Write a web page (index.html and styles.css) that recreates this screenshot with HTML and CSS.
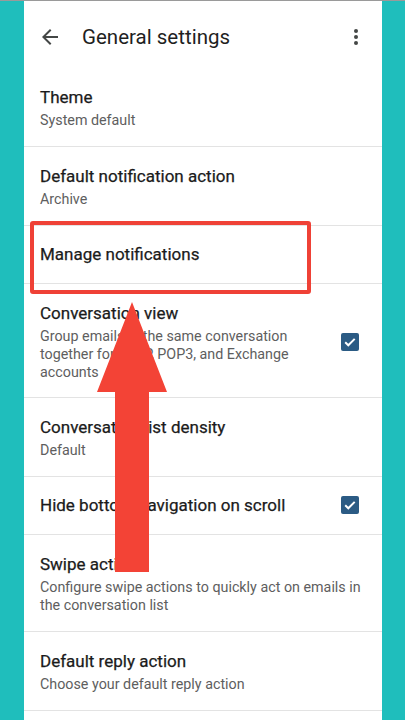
FILE: index.html
```html
<!DOCTYPE html>
<html>
<head>
<meta charset="utf-8">
<link rel="stylesheet" href="styles.css">
</head>
<body>
<div class="screen">
  <header class="appbar">
    <svg class="icon" viewBox="0 0 24 24"><path d="M20 11H7.83l5.59-5.59L12 4l-8 8 8 8 1.41-1.41L7.83 13H20v-2z"/></svg>
    <h1 class="appbar-title">General settings</h1>
    <svg class="icon menu" viewBox="0 0 24 24"><circle cx="12" cy="6" r="2"/><circle cx="12" cy="12" r="2"/><circle cx="12" cy="18" r="2"/></svg>
  </header>
  <ul class="list">
    <li class="item"><div class="text"><div class="title">Theme</div><div class="sub">System default</div></div></li>
    <li class="item"><div class="text"><div class="title">Default notification action</div><div class="sub">Archive</div></div></li>
    <li class="item single"><div class="text"><div class="title">Manage notifications</div></div></li>
    <li class="item tall"><div class="text"><div class="title">Conversation view</div><div class="sub">Group emails in the same conversation together for IMAP, POP3, and Exchange accounts</div></div><span class="check"><svg viewBox="0 0 18 18"><path d="M4.2 9.3l3.1 3 6.4-6.4" /></svg></span></li>
    <li class="item"><div class="text"><div class="title">Conversation list density</div><div class="sub">Default</div></div></li>
    <li class="item single"><div class="text"><div class="title">Hide bottom navigation on scroll</div></div><span class="check"><svg viewBox="0 0 18 18"><path d="M4.2 9.3l3.1 3 6.4-6.4" /></svg></span></li>
    <li class="item short"><div class="text wide"><div class="title">Swipe actions</div><div class="sub">Configure swipe actions to quickly act on emails in the conversation list</div></div></li>
    <li class="item"><div class="text"><div class="title">Default reply action</div><div class="sub">Choose your default reply action</div></div></li>
  </ul>
</div>
<div class="highlight"></div>
<svg class="arrow" viewBox="0 0 405 720"><polygon points="132,302 167,392 149,392 149,572 115,572 115,392 97,392"/></svg>
</body>
</html>
```
FILE: styles.css
```css
html, body { margin: 0; padding: 0; }
body {
  background: #1fbebc;
  border-top: 1px solid #9a9a9a;
  height: 719px;
  overflow: hidden;
  font-family: Roboto, "Noto Sans", sans-serif;
  position: relative;
}
.screen {
  width: 358px;
  margin-left: 24px;
  background: #fff;
  height: 719px;
}
.appbar {
  height: 67px;
  display: flex;
  align-items: center;
  padding: 4px 14px 0 14px;
  box-sizing: border-box;
}
.icon { width: 24px; height: 24px; fill: #444746; flex: none; }
.appbar-title {
  margin: 0 0 0 20px;
  font-size: 20.5px;
  font-weight: 400;
  color: #1f1f1f;
  flex: 1;
}
.list { list-style: none; margin: 0; padding: 0; }
.item {
  display: flex;
  align-items: center;
  padding: 19px 23px 17px 16px;
  border-bottom: 1px solid #e3e3e3;
}
.item.single { padding-top: 18px; padding-bottom: 19px; }
.item.tall { padding-bottom: 16px; }
.item.short { padding-bottom: 17px; padding-right: 12px; }
.item .text { flex: 1; padding-right: 14px; }
.item .text.wide { padding-right: 0; }
.title {
  font-size: 17px;
  line-height: 20px;
  color: #1b1b1b;
  font-weight: 400;
  -webkit-text-stroke: 0.25px #1b1b1b;
}
.sub {
  margin-top: 4px;
  font-size: 14.3px;
  line-height: 18px;
  color: #5e5e5e;
}
.check {
  width: 18px;
  height: 18px;
  background: #2b5b84;
  border-radius: 2px;
  flex: none;
  display: flex;
}
.check svg { width: 18px; height: 18px; fill: none; stroke: #fff; stroke-width: 2; }
.highlight {
  position: absolute;
  left: 30px;
  top: 220px;
  width: 273px;
  height: 65px;
  border: 4px solid #ef4136;
  border-radius: 3px;
}
.arrow {
  position: absolute;
  left: 0;
  top: -1px;
  width: 405px;
  height: 720px;
  fill: #f34336;
}
```
